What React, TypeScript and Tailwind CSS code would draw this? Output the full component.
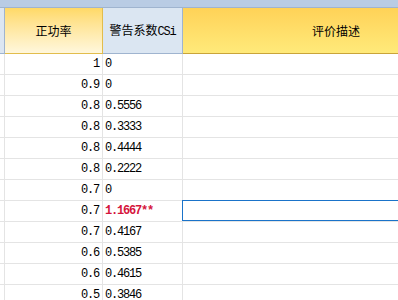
const rows: { power: string; csi: string; alert?: boolean }[] = [
  { power: '1', csi: '0' },
  { power: '0.9', csi: '0' },
  { power: '0.8', csi: '0.5556' },
  { power: '0.8', csi: '0.3333' },
  { power: '0.8', csi: '0.4444' },
  { power: '0.8', csi: '0.2222' },
  { power: '0.7', csi: '0' },
  { power: '0.7', csi: '1.1667**', alert: true },
  { power: '0.7', csi: '0.4167' },
  { power: '0.6', csi: '0.5385' },
  { power: '0.6', csi: '0.4615' },
  { power: '0.5', csi: '0.3846' }
];

const cjk = "font-['Noto_Sans_CJK_SC',sans-serif]";
const mono = "font-['Liberation_Mono','Noto_Sans_CJK_SC',monospace] text-[12px] tracking-[-1.2px]";

export default function App() {
  return (
    <div className="h-[300px] w-[398px] overflow-hidden bg-white text-black">
      <div className="h-[8px] border-b border-[#9fb4cf] bg-[#b9cce4]" />

      {/* header row */}
      <div className={`flex h-[46px] ${cjk} text-[12px]`}>
        <div className="w-[5px] shrink-0 border-r border-b border-[#9fb4cf] bg-[#dce6f2]" />
        <div className="flex w-[98px] shrink-0 items-center justify-center border-r border-b border-[#e2bd4c] bg-gradient-to-b from-[#ffd966] to-[#fff7dc]">
          正功率
        </div>
        <div className="flex w-[80px] shrink-0 items-center justify-center border-r border-b border-[#9fb4cf] bg-[#dbe6f2]">
          <span>
            警告系数
            <span className="font-['Liberation_Mono',monospace] text-[12px] tracking-[-1.2px]">CSi</span>
          </span>
        </div>
        <div className="flex w-[306px] shrink-0 items-center justify-center border-b border-[#c9a43a] bg-gradient-to-b from-[#ffd257] to-[#ffea7a]">
          评价描述
        </div>
      </div>

      {/* data rows */}
      {rows.map((row, index) => (
        <div key={index} className="flex h-[21px]">
          <div className="w-[5px] shrink-0 border-r border-b border-[#e4e4e4]" />
          <div className={`flex w-[98px] shrink-0 items-center justify-end border-r border-b border-[#e4e4e4] pr-[3px] ${mono}`}>
            {row.power}
          </div>
          <div
            className={`flex w-[80px] shrink-0 items-center border-r border-b border-[#e4e4e4] pl-[2px] ${mono} ${
              row.alert ? 'font-bold text-[#d5143c]' : ''
            }`}
          >
            {row.csi}
          </div>
          <div className="relative w-[306px] shrink-0 border-b border-[#e4e4e4]">
            {row.alert ? (
              <div className="absolute -top-px -left-px right-0 bottom-0 border border-[#1a73c9]" />
            ) : null}
          </div>
        </div>
      ))}
    </div>
  );
}
